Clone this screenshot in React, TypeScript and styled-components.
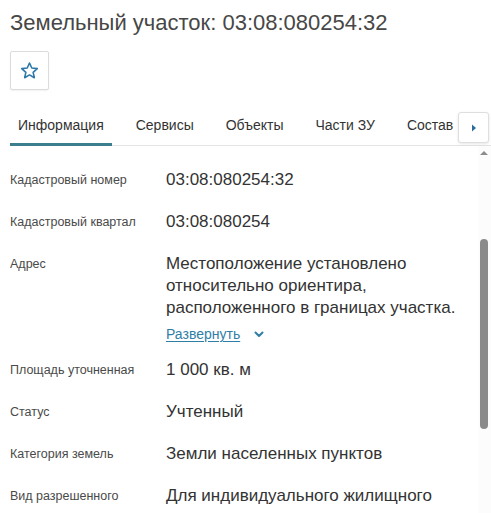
import React, {FC} from 'react';
import styled, {createGlobalStyle} from 'styled-components';

const GlobalStyle = createGlobalStyle`
	html, body {
		margin: 0;
		padding: 0;
		background: #fff;
	}
	body {
		font-family: "Liberation Sans", Arial, sans-serif;
		color: #333;
	}
`;

const Page = styled.div`
	width: 491px;
	height: 513px;
	display: flex;
	flex-direction: column;
	overflow: hidden;
	background: #fff;
`;

const Title = styled.h1`
	margin: 0;
	padding: 9px 10px 0;
	font-size: 22px;
	line-height: 28px;
	font-weight: 400;
	color: #474747;
`;

const StarButton = styled.button`
	margin: 14px 0 0 10px;
	width: 39px;
	height: 39px;
	display: flex;
	align-items: center;
	justify-content: center;
	padding: 0;
	background: #fff;
	border: 1px solid #dcdcdc;
	border-radius: 2px;
	box-shadow: 0 1px 2px rgba(0, 0, 0, 0.06);
`;

const TabBar = styled.div`
	margin: 21px 0 0 10px;
	height: 34px;
	display: flex;
	align-items: stretch;
	gap: 16px;
	border-bottom: 1px solid #e4e4e4;
	position: relative;
`;

const Tab = styled.div<{$active?: boolean}>`
	padding: 0 8px;
	display: flex;
	align-items: center;
	padding-bottom: 4px;
	font-size: 14px;
	color: #333;
	white-space: nowrap;
	border-bottom: 3px solid ${p => p.$active ? '#3b7e8e' : 'transparent'};
	margin-bottom: -1px;
`;

const MoreButton = styled.button`
	position: absolute;
	right: 2px;
	top: 1px;
	width: 31px;
	height: 31px;
	padding: 0;
	display: flex;
	align-items: center;
	justify-content: center;
	background: #fff;
	border: 1px solid #dedede;
	border-radius: 3px;
	box-shadow: 0 1px 3px rgba(0, 0, 0, 0.1);
`;

const Viewport = styled.div`
	flex: 1;
	min-height: 0;
	display: flex;
`;

const Scroller = styled.div`
	flex: 1;
	overflow: hidden;
`;

const List = styled.div`
	padding-top: 13px;
`;

const Row = styled.div<{$tall?: boolean}>`
	display: grid;
	grid-template-columns: 156px 1fr;
	padding: 10px 0 ${p => p.$tall ? 4 : 10}px 10px;
`;

const Label = styled.div`
	font-size: 12.5px;
	line-height: 22px;
	color: #4a4a4a;
`;

const Value = styled.div`
	font-size: 17px;
	line-height: 22px;
	color: #333;
	padding-right: 10px;
`;

const Expand = styled.a`
	margin-top: 4px;
	display: inline-flex;
	align-items: center;
	gap: 14px;
	font-size: 14px;
	line-height: 22px;
	color: #2f7ea6;
	text-decoration: underline;
	text-underline-offset: 2px;
`;

const Track = styled.div`
	width: 12px;
	padding-right: 1px;
	display: flex;
	flex-direction: column;
	align-items: center;
	background: #fcfcfc;
`;

const UpArrow = styled.div`
	margin-top: 5px;
	width: 0;
	height: 0;
	border-left: 4px solid transparent;
	border-right: 4px solid transparent;
	border-bottom: 4px solid #8c8c8c;
`;

const Thumb = styled.div`
	margin-top: 84px;
	width: 8px;
	height: 190px;
	border-radius: 4px;
	background: #8a8a8a;
`;

const StarIcon = () =>
	<svg width="19" height="19" viewBox="0 0 24 24" fill="none" stroke="#2c78a8" strokeWidth="2" strokeLinejoin="round">
		<polygon points="12,2.5 14.9,8.9 21.8,9.6 16.6,14.3 18.1,21.1 12,17.6 5.9,21.1 7.4,14.3 2.2,9.6 9.1,8.9" />
	</svg>;

const Caret = () =>
	<svg width="6" height="8" viewBox="0 0 6 8">
		<polygon points="1,0.5 5,4 1,7.5" fill="#2b6c9c" />
	</svg>;

const Chevron = () =>
	<svg width="10" height="7" viewBox="0 0 10 7" fill="none" stroke="#2f7ea6" strokeWidth="2" strokeLinecap="round" strokeLinejoin="round">
		<polyline points="1.5,1.5 5,5 8.5,1.5" />
	</svg>;

const tabs = ['Информация', 'Сервисы', 'Объекты', 'Части ЗУ', 'Состав'];

const rows: {label: string; value: string}[] = [
	{label: 'Кадастровый номер', value: '03:08:080254:32'},
	{label: 'Кадастровый квартал', value: '03:08:080254'},
];

const rest: {label: string; value: string}[] = [
	{label: 'Площадь уточненная', value: '1 000 кв. м'},
	{label: 'Статус', value: 'Учтенный'},
	{label: 'Категория земель', value: 'Земли населенных пунктов'},
	{label: 'Вид разрешенного использования', value: 'Для индивидуального жилищного строительства'},
];

const App: FC = () =>
	<Page>
		<GlobalStyle />
		<Title>Земельный участок: 03:08:080254:32</Title>
		<StarButton>
			<StarIcon />
		</StarButton>
		<TabBar>
			{tabs.map((t, i) => <Tab key={t} $active={i === 0}>{t}</Tab>)}
			<MoreButton>
				<Caret />
			</MoreButton>
		</TabBar>
		<Viewport>
			<Scroller>
				<List>
					{rows.map(r =>
						<Row key={r.label}>
							<Label>{r.label}</Label>
							<Value>{r.value}</Value>
						</Row>
					)}
					<Row $tall>
						<Label>Адрес</Label>
						<Value>
							Местоположение установлено относительно ориентира, расположенного в границах участка.
							<div>
								<Expand>Развернуть <Chevron /></Expand>
							</div>
						</Value>
					</Row>
					{rest.map(r =>
						<Row key={r.label}>
							<Label>{r.label}</Label>
							<Value>{r.value}</Value>
						</Row>
					)}
				</List>
			</Scroller>
			<Track>
				<UpArrow />
				<Thumb />
			</Track>
		</Viewport>
	</Page>;

export default App;
